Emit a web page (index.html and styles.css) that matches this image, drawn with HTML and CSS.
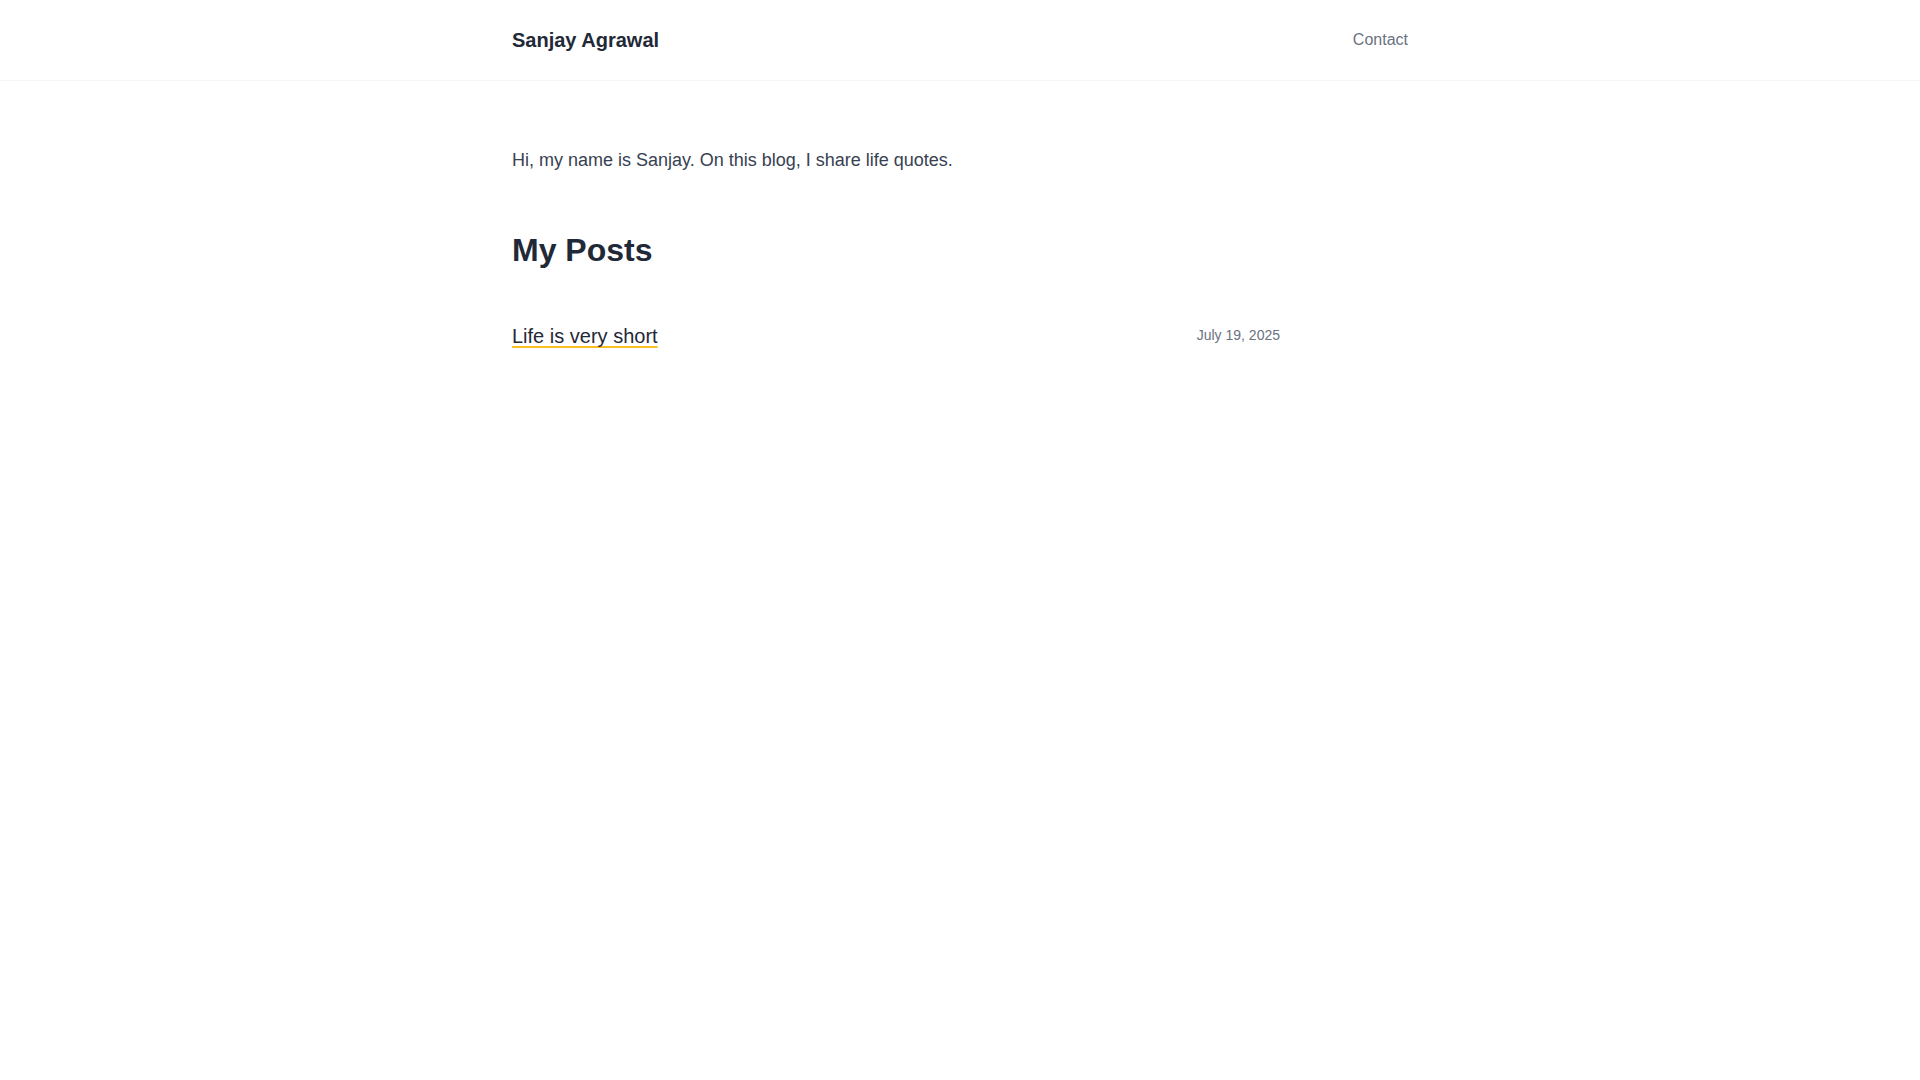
FILE: index.html
```html
<!DOCTYPE html>
<html lang="en">
<head>
<meta charset="utf-8">
<title>Sanjay Agrawal</title>
<link rel="stylesheet" href="styles.css">
</head>
<body>
<header class="site-header">
  <div class="container header-inner">
    <a class="brand" href="#">Sanjay Agrawal</a>
    <nav class="nav"><a href="#">Contact</a></nav>
  </div>
</header>
<main class="container main">
  <p class="intro">Hi, my name is Sanjay. On this blog, I share life quotes.</p>
  <h2 class="section-title">My Posts</h2>
  <ul class="posts">
    <li class="post">
      <a class="post-link" href="#">Life is very short</a>
      <span class="post-date">July 19, 2025</span>
    </li>
  </ul>
</main>
</body>
</html>
```
FILE: styles.css
```css
* { box-sizing: border-box; }
html, body { margin: 0; padding: 0; background: #fff; }
body { font-family: "Liberation Sans", Arial, sans-serif; color: #1f2937; }
a { text-decoration: none; color: inherit; }

.container { max-width: 896px; margin: 0 auto; }

.site-header { border-bottom: 1px solid #f3f4f6; }
.header-inner {
  height: 80px;
  display: flex;
  align-items: center;
  justify-content: space-between;
}
.brand { font-size: 20px; line-height: 28px; font-weight: 700; color: #1f2937; }
.nav a { font-size: 16px; line-height: 24px; color: #6b7280; }

.main { padding-top: 65px; }
.intro { margin: 0 0 56px; font-size: 18px; line-height: 28px; color: #374151; }
.section-title { margin: 0 0 52px; font-size: 32px; line-height: 40px; font-weight: 700; color: #1f2937; }

.posts { list-style: none; margin: 0; padding: 0; max-width: 768px; }
.post { display: flex; align-items: center; justify-content: space-between; }
.post-link {
  font-size: 20px;
  line-height: 28px;
  color: #1f2937;
  text-decoration: underline;
  text-decoration-color: #fbbf24;
  text-decoration-thickness: 2px;
  text-underline-offset: 3px;
  text-decoration-skip-ink: none;
}
.post-date { font-size: 14px; line-height: 20px; color: #6b7280; margin-bottom: 2px; }
```
